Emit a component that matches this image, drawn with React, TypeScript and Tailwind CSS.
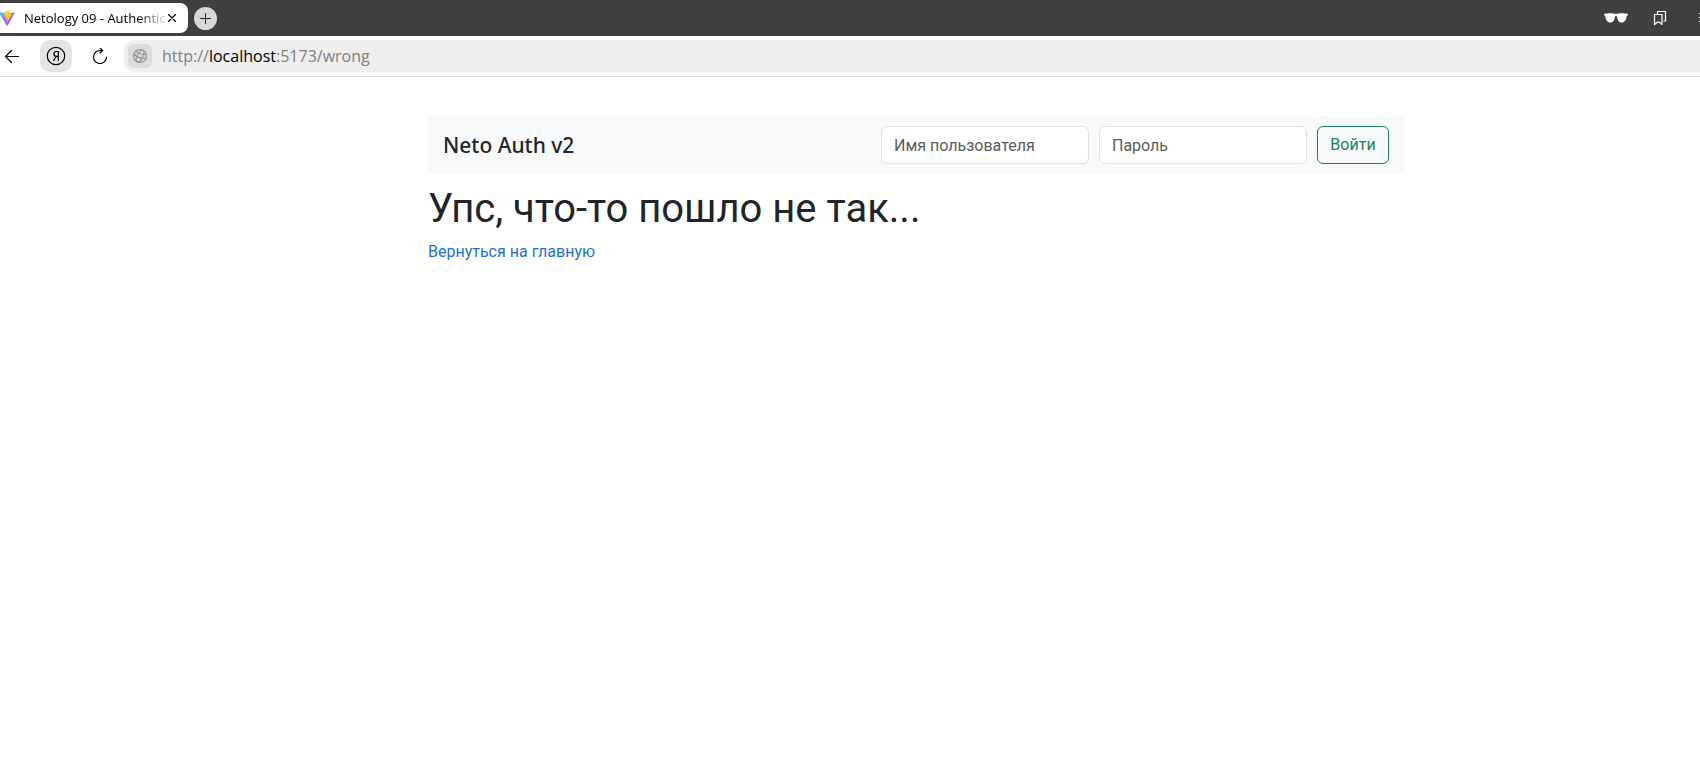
import React from 'react';

const icon = {
  fill: 'none',
  stroke: 'currentColor',
  strokeLinecap: 'round' as const,
  strokeLinejoin: 'round' as const,
  'aria-hidden': true,
};

function ViteLogo() {
  return (
    <svg className="-ml-px h-4 w-4 shrink-0" viewBox="0 0 32 32" aria-hidden="true">
      <defs>
        <linearGradient id="shield" x1="0" y1="0" x2="0.6" y2="1">
          <stop offset="0" stopColor="#41d1ff" />
          <stop offset="1" stopColor="#bd34fe" />
        </linearGradient>
        <linearGradient id="bolt" x1="0.4" y1="0" x2="0.6" y2="1">
          <stop offset="0" stopColor="#ffea83" />
          <stop offset="0.1" stopColor="#ffdd35" />
          <stop offset="1" stopColor="#ffa800" />
        </linearGradient>
      </defs>
      <path fill="url(#shield)" d="M31.9 5.7 17.1 30.9c-.3.5-1.1.6-1.4 0L.1 5.7c-.3-.6.2-1.3.9-1.2l15 2.6 14.9-2.6c.7-.1 1.3.6 1 1.2Z" />
      <path fill="url(#bolt)" d="m22.7.1-10.9 2.1c-.2 0-.3.2-.3.4l-.7 11.3c0 .3.2.5.5.4l3-.7c.3 0 .5.2.5.5l-.9 4.400c-.1.3.2.5.5.5l1.900-.6c.3-.1.6.2.5.5l-1.400 6.900c-.1.4.5.7.7.3l9-18.200c.2-.3-.1-.6-.4-.5l-3.200.6c-.3 0-.6-.2-.5-.5l2.100-7.100c.1-.3-.1-.6-.4-.5Z" />
    </svg>
  );
}

function TabStrip() {
  return (
    <header className="flex h-9 items-center bg-[#404040]">
      <div className="flex h-[30px] w-[188px] items-center gap-[9px] rounded-r-lg bg-white">
        <ViteLogo />
        <span className="whitespace-nowrap bg-linear-to-r from-black from-80% to-black/10 bg-clip-text font-['Open_Sans',sans-serif] text-[13px] leading-5 text-transparent">
          Netology 09 - Authentic
        </span>
        <button type="button" aria-label="Закрыть вкладку" className="-ml-[9px] text-black">
          <svg {...icon} className="h-3 w-3" viewBox="0 0 12 12" strokeWidth="1.1">
            <path d="m2.500 2.500 7 7M9.500 2.500l-7 7" />
          </svg>
        </button>
      </div>
      <button type="button" aria-label="Новая вкладка" className="ml-1.5 flex h-[23px] w-[23px] items-center justify-center rounded-full bg-[#d8d8d8] text-[#222]">
        <svg {...icon} className="h-[11px] w-[11px]" viewBox="0 0 11 11" strokeWidth="1">
          <path d="M5.500.5v10M.5 5.500h10" />
        </svg>
      </button>
      <div className="ml-auto flex items-center text-white">
        <button type="button" aria-label="Режим инкогнито" className="mr-6">
          <svg className="h-[10px] w-6" viewBox="0 0 24 10" fill="currentColor" aria-hidden="true">
            <path d="M0 1C3 0 9 0 12 1c3-1 9-1 12 0v1.200l-1.300.5C22.500 7 20.500 9.500 17.700 9.500c-2.900 0-4.200-2.500-4.700-5.500-.2-1-.6-1.200-1-1.200S11.200 3 11 4c-.5 3-1.800 5.500-4.700 5.500C3.500 9.500 1.500 7 1.300 2.700L0 2.200Z" />
          </svg>
        </button>
        <button type="button" aria-label="Закладки" className="mr-[31px]">
          <svg {...icon} className="h-4 w-4" viewBox="0 0 16 16" strokeWidth="1.2">
            <path d="M2.500 4.500h7.500v10l-1.500-1.500c-1.200-1-3-1-4.200 0l-1.800 1.500ZM5.500 4.300V1.500h8V11h-1.500" />
          </svg>
        </button>
        <button type="button" aria-label="Меню">
          <svg {...icon} className="h-3 w-px" viewBox="0 0 1 12" strokeWidth="1">
            <path d="M0 1.500h1M0 5.500h1M0 9.500h1" />
          </svg>
        </button>
      </div>
    </header>
  );
}

function AddressBar() {
  return (
    <div className="flex h-[41px] items-center border-b border-[#dedede] bg-white text-black">
      <button type="button" aria-label="Назад" className="ml-1">
        <svg {...icon} className="h-4 w-4" viewBox="0 0 16 16" strokeWidth="1.2">
          <path d="M14.500 8.500H1.500M7.500 2.500l-6 6 6 6" />
        </svg>
      </button>
      <button type="button" aria-label="Яндекс" className="ml-5 flex h-8 w-8 items-center justify-center rounded-[10px] bg-[#e4e4e4]">
        <svg {...icon} className="h-5 w-5" viewBox="0 0 20 20" strokeWidth="1.2">
          <circle cx="10" cy="10" r="8.700" />
          <path d="M12.300 14.500v-9h-1.800C8.700 5.500 7.900 6.600 7.900 8c0 1.500 1 2.400 2.600 2.400h1.800M10.200 10.400l-2.500 4.100" />
        </svg>
      </button>
      <button type="button" aria-label="Обновить" className="ml-5">
        <svg {...icon} className="h-4 w-4" viewBox="0 0 16 16" strokeWidth="1.2">
          <path d="M14.500 9A6.500 6.500 0 1 1 8 2.500h2.500M8 0l2.600 2.500L8 5" />
        </svg>
      </button>
      <div className="ml-4 flex h-8 flex-1 items-center rounded-l-[10px] bg-[#eee] pl-1">
        <span className="flex h-6 w-6 items-center justify-center rounded-md bg-[#dcdcdc] text-[#929292]">
          <svg {...icon} className="h-4 w-4" viewBox="0 0 16 16" strokeWidth="1.1">
            <circle cx="8" cy="8" r="6.500" />
            <ellipse cx="8" cy="8" rx="2.800" ry="6.500" transform="rotate(25 8 8)" />
            <path d="M2 6c3 3.200 8 5 12 4M3.800 3.200c3 3 6.500 4 10.200 2.800" />
          </svg>
        </span>
        <div role="textbox" aria-label="Адресная строка" className="ml-2.5 font-['Open_Sans',sans-serif] text-base text-[#808080]">
          http://<span className="text-black">localhost</span>:5173/wrong
        </div>
      </div>
    </div>
  );
}

const field =
  'h-[38px] w-52 rounded-md border border-[#dee2e6] bg-white px-3 text-base text-[#212529] outline-none placeholder:text-[#595c5f]';

export default function App() {
  return (
    <div className="min-h-screen bg-white font-['Roboto',sans-serif] text-[#212529]">
      <TabStrip />
      <AddressBar />
      <main className="pt-[39px] pr-[296px] pl-[428px]">
        <nav className="flex items-center justify-between bg-[#f8f9fa] px-[15px] py-2.5">
          <a href="/" className="font-['Noto_Sans',sans-serif] text-[21px] leading-7 font-medium">Neto Auth v2</a>
          <form className="flex gap-2.5" onSubmit={(event) => event.preventDefault()}>
            <input className={field} type="text" placeholder="Имя пользователя" aria-label="Имя пользователя" />
            <input className={field} type="password" placeholder="Пароль" aria-label="Пароль" />
            <button type="submit" className="h-[38px] w-18 rounded-md border border-[#198754] text-base text-[#198754]">
              Войти
            </button>
          </form>
        </nav>
        <h1 className="mt-[11px] mb-[7px] text-[40px] leading-12">Упс, что-то пошло не так...</h1>
        <a href="/" className="text-[#1f6fdb]">Вернуться на главную</a>
      </main>
    </div>
  );
}
